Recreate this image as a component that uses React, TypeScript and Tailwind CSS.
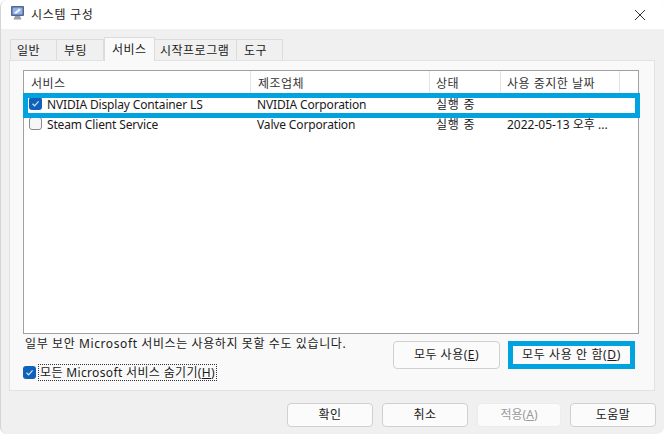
const font = "font-['Noto_Sans','Noto_Sans_CJK_KR',sans-serif]";

const tabs = [
  { label: "일반", w: "w-[47px]", pl: "pl-[6px]" },
  { label: "부팅", w: "w-[47px]", pl: "pl-[7px]" },
  { label: "서비스", w: "w-[51px]", pl: "pl-[7px]", active: true },
  { label: "시작프로그램", w: "w-[82px]", pl: "pl-[5px]" },
  { label: "도구", w: "w-[46px]", pl: "pl-[7px]" },
];

const columns = [
  { label: "서비스", w: "w-[227px]", pl: "pl-[7px]" },
  { label: "제조업체", w: "w-[179px]", pl: "pl-[7px]" },
  { label: "상태", w: "w-[71px]", pl: "pl-[6px]" },
  { label: "사용 중지한 날짜", w: "w-[119px]", pl: "pl-[6px]" },
];

const services = [
  { name: "NVIDIA Display Container LS", vendor: "NVIDIA Corporation", state: "실행 중", date: "", checked: true },
  { name: "Steam Client Service", vendor: "Valve Corporation", state: "실행 중", date: "2022-05-13 오후 ...", checked: false },
];

const Check = ({ checked, className = "" }: { checked: boolean; className?: string }) =>
  checked ? (
    <span className={`flex h-[13px] w-[13px] shrink-0 items-center justify-center rounded-[3px] bg-[#0f62b8] ${className}`}>
      <svg width="9" height="9" viewBox="0 0 9 9" fill="none" stroke="#cfe3f7" strokeWidth="1.2">
        <path d="M1.5 4.8 3.6 6.8 7.6 2.3" />
      </svg>
    </span>
  ) : (
    <span className={`block h-[13px] w-[13px] shrink-0 rounded-[3px] border border-[#8a8a8a] bg-[#f6f6f6] ${className}`} />
  );

const Button = ({ children, className = "" }: { children: React.ReactNode; className?: string }) => (
  <div className={`flex items-center justify-center rounded-[4px] border border-[#d0d0d0] bg-[#fbfbfb] text-[12px] text-[#1a1a1a] ${className}`}>
    {children}
  </div>
);

const App = () => {
  return (
    <div className={`${font} relative h-[434px] w-[664px] overflow-hidden bg-white text-[12px] leading-none text-[#1a1a1a]`}>
      <div className="flex h-[434px] w-[664px] flex-col overflow-hidden rounded-[7px] border-l border-[#d4d4d4] bg-[#f0f0f0]">
        <div className="flex h-[29px] shrink-0 items-center bg-white pl-[9px]">
          <svg width="16" height="17" viewBox="0 0 16 17" className="mt-[-2px]">
            <rect x="1" y="1" width="13" height="10" rx="1" fill="#55658c" />
            <rect x="2.5" y="2.5" width="10" height="7" fill="#8fb2e8" />
            <path d="M4 8 9 3.5 11 5 6 9Z" fill="#eef3fb" />
            <path d="M5 11h5l1.5 3.5h-8Z" fill="#9a9ea6" />
          </svg>
          <span className="ml-[5px] mt-[1px] text-[12px] tracking-[0.7px]">시스템 구성</span>
          <svg width="10" height="10" viewBox="0 0 10 10" className="ml-auto mr-[19px]" stroke="#333" strokeWidth="1">
            <path d="M0 0 10 10M10 0 0 10" />
          </svg>
        </div>

        <div className="flex h-[31px] shrink-0 items-end pl-[9px]">
          {tabs.map((tab) => (
            <div
              key={tab.label}
              className={`flex ${tab.w} ${tab.pl} items-center border-[#dcdcdc] tracking-[0.5px] ${
                tab.active
                  ? "z-10 mb-[-1px] h-[24px] border-x border-t bg-[#f9f9f9]"
                  : "h-[21px] border-r border-t bg-[#f0f0f0] pt-[2px] first:border-l"
              }`}
            >
              {tab.label}
            </div>
          ))}
        </div>

        <div className="ml-[8px] flex h-[331px] w-[646px] shrink-0 flex-col border border-[#e2e2e2] bg-[#f9f9f9] pl-[13px] pt-[9px]">
          <div className="flex h-[264px] w-[616px] flex-col border border-[#a0a0a0] bg-white">
            <div className="flex h-[22px] shrink-0">
              {columns.map((col) => (
                <div key={col.label} className={`flex ${col.w} items-center border-r border-[#e4e4e4] ${col.pl} pt-[3px] tracking-[0.5px] text-[#333]`}>
                  {col.label}
                </div>
              ))}
            </div>
            {services.map((s) => (
              <div key={s.name} className="flex h-[20px] shrink-0 items-center pt-[3px]">
                <div className="flex w-[227px] items-center gap-[5px] pl-[5px] tracking-[-0.15px]">
                  <Check checked={s.checked} className="mt-[-2px]" />
                  <span>{s.name}</span>
                </div>
                <div className="w-[179px] pl-[6px] tracking-[-0.15px]">{s.vendor}</div>
                <div className="w-[71px] pl-[6px] tracking-[0.8px]">{s.state}</div>
                <div className="w-[119px] pl-[6px]">{s.date}</div>
              </div>
            ))}
          </div>

          <div className="mt-[7px] flex">
            <div className="flex w-[370px] flex-col pl-[2px]">
              <div className="mt-[-3px] leading-[12px] tracking-[0.6px]">일부 보안 Microsoft 서비스는 사용하지 못할 수도 있습니다.</div>
              <div className="ml-[-2px] mt-[14px] flex items-center gap-[2px]">
                <Check checked />
                <span className="border border-dotted border-[#333] px-[1px] py-[1px] leading-[13px] tracking-[0.35px]">
                  모든 Microsoft 서비스 숨기기(<span className="underline">H</span>)
                </span>
              </div>
            </div>
            <div className="flex gap-[8px]">
              <Button className="h-[28px] w-[107px] tracking-[0.5px]">
                <span>모두 사용(<span className="underline">E</span>)</span>
              </Button>
              <div className="relative h-[28px] w-[127px]">
                <Button className="h-full w-full tracking-[0.6px]">
                  <span>모두 사용 안 함(<span className="underline">D</span>)</span>
                </Button>
                <div className="absolute inset-0 border-[5px] border-[#00a2e0]" />
              </div>
            </div>
          </div>
        </div>

        <div className="flex justify-end gap-[9px] pr-[8px] pt-[12px]">
          <Button className="h-[24px] w-[86px] border-[#0f5fa8] tracking-[0.5px]">확인</Button>
          <Button className="h-[24px] w-[86px] tracking-[0.5px]">취소</Button>
          <Button className="h-[24px] w-[84px] border-[#ececec] bg-[#f3f3f3] text-[#9a9a9a]">
            <span>적용(<span className="underline">A</span>)</span>
          </Button>
          <Button className="h-[24px] w-[86px] tracking-[0.5px]">도움말</Button>
        </div>
      </div>
      <div className="absolute left-[23px] top-[93px] h-[25px] w-[617px] border-[5px] border-[#00a2e0]" />
    </div>
  );
};

export default App;
